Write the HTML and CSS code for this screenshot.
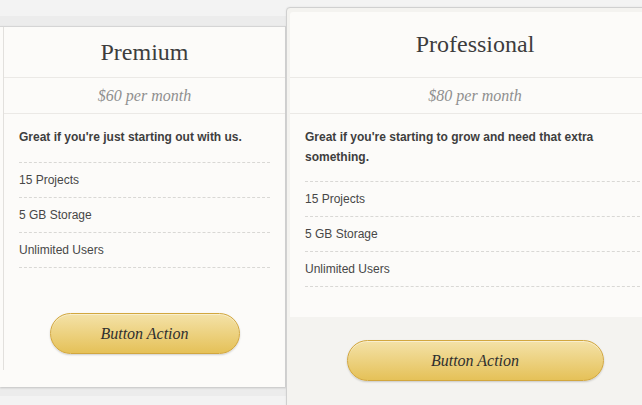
FILE: index.html
```html
<!DOCTYPE html>
<html>
<head>
<meta charset="utf-8">
<link rel="stylesheet" href="styles.css">
</head>
<body>
<div class="pricing">
  <div class="table-wrap">
    <div class="table">
      <div class="ghost"></div>
      <div class="plan">
        <div class="plan-head">Premium</div>
        <div class="plan-price">$60 per month</div>
        <div class="plan-body">
          <p class="plan-desc">Great if you're just starting out with us.</p>
          <ul class="features">
            <li>15 Projects</li>
            <li>5 GB Storage</li>
            <li>Unlimited Users</li>
          </ul>
        </div>
        <div class="plan-foot">
          <a class="btn btn-small" href="#">Button Action</a>
        </div>
      </div>
    </div>
  </div>
  <div class="featured">
    <div class="featured-panel">
      <div class="plan-head plan-head-tall">Professional</div>
      <div class="plan-price">$80 per month</div>
      <div class="plan-body">
        <p class="plan-desc">Great if you're starting to grow and need that extra something.</p>
        <ul class="features">
          <li>15 Projects</li>
          <li>5 GB Storage</li>
          <li>Unlimited Users</li>
        </ul>
      </div>
    </div>
    <div class="featured-foot">
      <a class="btn btn-wide" href="#">Button Action</a>
    </div>
  </div>
</div>
</body>
</html>
```

FILE: styles.css
```css
html, body {
  margin: 0;
  padding: 0;
}

body {
  background: #f3f3f3;
  font-family: "Liberation Sans", Arial, sans-serif;
  overflow: hidden;
  width: 642px;
  height: 405px;
}

.pricing {
  display: flex;
  align-items: flex-start;
  width: 642px;
  overflow: hidden;
}

.table-wrap {
  margin-top: 16px;
  padding: 10px 0 9px;
  background: #ececec;
  width: 286px;
  flex: none;
}

.table {
  display: flex;
  background: #fcfbf9;
  border-top: 1px solid #d5d5d5;
  border-right: 1px solid #d3d3d3;
  box-shadow: 0 1px 2px rgba(0, 0, 0, 0.18);
  padding-bottom: 17px;
}

.ghost {
  width: 3px;
  flex: none;
}

.plan {
  flex: 1;
  border-left: 1px solid #e2e0dd;
  display: flex;
  flex-direction: column;
}

.plan-head {
  height: 50px;
  display: flex;
  align-items: center;
  justify-content: center;
  font-family: "Liberation Serif", "Times New Roman", serif;
  font-size: 24px;
  color: #3d3d3d;
  border-bottom: 1px solid #ebe9e6;
}

.plan-head-tall {
  height: 64px;
  padding-bottom: 1px;
}

.plan-price {
  height: 35px;
  display: flex;
  align-items: center;
  justify-content: center;
  font-family: "Liberation Serif", "Times New Roman", serif;
  font-style: italic;
  font-size: 16px;
  color: #8f8f8f;
  border-bottom: 1px solid #ebe9e6;
}

.plan-body {
  padding: 0 15px;
}

.plan-desc {
  margin: 0;
  padding: 13px 0 15px;
  font-size: 12px;
  line-height: 20px;
  font-weight: bold;
  color: #3e3e3e;
  border-bottom: 1px dashed #d9d8d5;
}

.features {
  list-style: none;
  margin: 0;
  padding: 0;
}

.features li {
  height: 34px;
  line-height: 34px;
  font-size: 12px;
  color: #474747;
  border-bottom: 1px dashed #d9d8d5;
}

.plan-foot {
  display: flex;
  justify-content: center;
  padding: 45px 0 16px;
}

.btn {
  display: flex;
  align-items: center;
  justify-content: center;
  height: 39px;
  border: 1px solid #d2a73f;
  border-radius: 21px;
  background: linear-gradient(#f4e2a8, #e5c158);
  box-shadow: inset 0 1px 0 rgba(255, 255, 255, 0.45), 0 1px 2px rgba(0, 0, 0, 0.18);
  font-family: "Liberation Serif", "Times New Roman", serif;
  font-style: italic;
  font-size: 16px;
  color: #2f2f2f;
  text-decoration: none;
}

.btn-small {
  width: 188px;
}

.btn-wide {
  width: 255px;
}

.featured {
  margin-top: 7px;
  width: 370px;
  flex: none;
  background: #f4f3f0;
  border: 1px solid #d0d0d0;
  border-radius: 4px;
  padding: 4px 3px 0;
  box-shadow: 0 0 2px rgba(0, 0, 0, 0.08);
}

.featured-panel {
  background: #fcfbf9;
  border-radius: 3px 3px 0 0;
  padding-bottom: 30px;
}

.featured-panel .plan-desc {
  padding-bottom: 14px;
}

.featured-foot {
  display: flex;
  justify-content: center;
  padding: 23px 0 40px;
}
```
